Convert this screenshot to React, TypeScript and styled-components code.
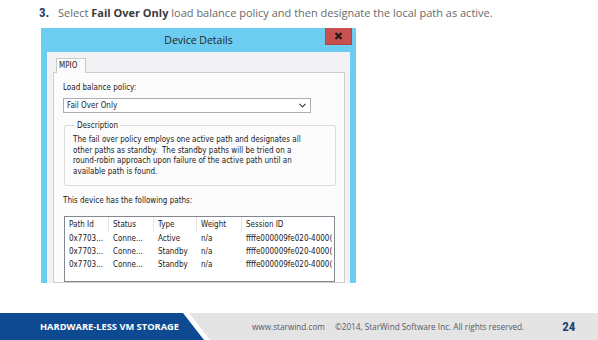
import React from "react";
import styled, { createGlobalStyle } from "styled-components";

const GlobalStyle = createGlobalStyle`
  html, body { margin: 0; padding: 0; background: #ffffff; }
  body { width: 598px; height: 340px; overflow: hidden; }
  * { box-sizing: border-box; }
`;

const Page = styled.div`
  width: 598px;
  height: 340px;
  display: flex;
  flex-direction: column;
  padding-top: 5px;
`;

const Heading = styled.div`
  display: flex;
  align-items: baseline;
  padding-left: 39px;
  height: 16px;
  font-family: "Open Sans", sans-serif;
  font-size: 11px;
  line-height: 16px;
  color: #6a6a6a;
  white-space: nowrap;
`;

const StepNum = styled.span`
  font-family: "Liberation Sans Narrow", "Roboto Condensed", "Liberation Sans", sans-serif;
  font-weight: 700;
  font-size: 13px;
  color: #1d3f72;
  width: 19px;
`;

const Strong = styled.b`
  color: #3a3a3a;
  font-weight: 700;
`;

const Dialog = styled.div`
  margin: 7px 0 0 41px;
  width: 315px;
  height: 255px;
  overflow: hidden;
  background: #6dcdf0;
  display: flex;
  flex-direction: column;
`;

const TitleBar = styled.div`
  position: relative;
  height: 24px;
  flex: none;
  display: flex;
  align-items: center;
  justify-content: center;
  font-family: "Open Sans", sans-serif;
  font-size: 10.5px;
  color: #1e1e1e;
`;

const CloseBtn = styled.div`
  position: absolute;
  top: 0;
  right: 4px;
  width: 27px;
  height: 17px;
  background: #c75050;
  border: 1px solid #b34545;
  border-top: none;
  display: flex;
  align-items: center;
  justify-content: center;
`;

const Body = styled.div`
  flex: 1;
  margin: 0 6px;
  background: #f2f1f3;
  padding: 6px 5px 0 6px;
  display: flex;
  flex-direction: column;
  font-family: "DejaVu Sans Condensed", "DejaVu Sans", sans-serif;
  font-size: 8px;
  color: #1a1a1a;
`;

const TabRow = styled.div`
  display: flex;
  padding-left: 3px;
`;

const Tab = styled.div`
  height: 15px;
  width: 30px;
  padding-left: 2px;
  border: 1px solid #c9c9c9;
  border-bottom: none;
  background: #fcfcfc;
  line-height: 14px;
  margin-bottom: -1px;
  position: relative;
  z-index: 1;
`;

const Panel = styled.div`
  flex: 1;
  border: 1px solid #cfcfcf;
  background: #fcfcfc;
  padding: 9px 10px 0 9px;
  display: flex;
  flex-direction: column;
`;

const Label = styled.div<{ $mt?: number }>`
  line-height: 11px;
  margin-top: ${(p) => p.$mt ?? 0}px;
`;

const Select = styled.div`
  margin-top: 5px;
  width: 248px;
  height: 15px;
  border: 1px solid #abadb3;
  background: #ffffff;
  display: flex;
  align-items: center;
  justify-content: space-between;
  padding: 0 4px 0 3px;
`;

const Group = styled.fieldset`
  margin: 7px 0 0 1px;
  width: 272px;
  padding: 4px 8px 8px 8px;
  border: 1px solid #dcdcdc;
  border-radius: 2px;
`;

const Legend = styled.legend`
  padding: 0 2px;
  margin-left: 2px;
  line-height: 11px;
`;

const GroupLine = styled.div`
  line-height: 10.5px;
  white-space: nowrap;
`;

const Table = styled.div`
  margin: 10px 0 0 1px;
  width: 271px;
  flex: 1;
  border: 1px solid #828790;
  background: #ffffff;
  overflow: hidden;
`;

const Row = styled.div<{ $head?: boolean }>`
  display: grid;
  grid-template-columns: 44px 45px 43px 45px 120px;
  height: ${(p) => (p.$head ? 15 : 13)}px;
  align-items: center;
  white-space: nowrap;
`;

const Cell = styled.div<{ $head?: boolean }>`
  padding-left: 4px;
  height: 100%;
  display: flex;
  align-items: center;
  overflow: hidden;
  border-right: ${(p) => (p.$head ? "1px solid #e5e5e5" : "none")};
`;

const Footer = styled.div`
  margin-top: auto;
  height: 27px;
  flex: none;
  background: #e4e4e4;
  display: flex;
  align-items: center;
  font-family: "Open Sans", sans-serif;
  white-space: nowrap;
`;

const TabEdge = styled.div`
  width: 210px;
  height: 100%;
  background: #ffffff;
  clip-path: polygon(0 0, 189px 0, 210px 100%, 0 100%);
  flex: none;
`;

const BlueTab = styled.div`
  width: 204px;
  height: 100%;
  background: #0e4a91;
  clip-path: polygon(0 0, 183px 0, 204px 100%, 0 100%);
  display: flex;
  align-items: center;
  padding-left: 40px;
  color: #ffffff;
  font-weight: 700;
  font-size: 9.3px;
`;

const FootText = styled.span<{ $ml: number }>`
  margin-left: ${(p) => p.$ml}px;
  font-size: 8.2px;
  color: #555a66;
`;

const PageNum = styled.span`
  margin-left: 38px;
  font-family: "Liberation Sans Narrow", "Roboto Condensed", "Liberation Sans", sans-serif;
  font-weight: 700;
  font-size: 13px;
  color: #1d3f72;
`;

const description = [
  "The fail over policy employs one active path and designates all",
  "other paths as standby.\u00a0 The standby paths will be tried on a",
  "round-robin approach upon failure of the active path until an",
  "available path is found.",
];

const paths = [
  ["0x7703...", "Conne...", "Active", "n/a", "ffffe000009fe020-4000("],
  ["0x7703...", "Conne...", "Standby", "n/a", "ffffe000009fe020-4000("],
  ["0x7703...", "Conne...", "Standby", "n/a", "ffffe000009fe020-4000("],
];

export default function App() {
  return (
    <>
      <GlobalStyle />
      <Page>
        <Heading>
          <StepNum>3.</StepNum>
          <span>
            Select <Strong>Fail Over Only</Strong> load balance policy and then designate the local path as active.
          </span>
        </Heading>
        <Dialog>
          <TitleBar>
            Device Details
            <CloseBtn>
              <svg width="9" height="8" viewBox="0 0 9 8">
                <path d="M1.5 1 L7.5 7 M7.5 1 L1.5 7" stroke="#1a1a1a" strokeWidth="2" />
              </svg>
            </CloseBtn>
          </TitleBar>
          <Body>
            <TabRow>
              <Tab>MPIO</Tab>
            </TabRow>
            <Panel>
              <Label>Load balance policy:</Label>
              <Select>
                <span>Fail Over Only</span>
                <svg width="7" height="5" viewBox="0 0 7 5">
                  <path d="M0.5 0.8 L3.5 3.8 L6.5 0.8" stroke="#444" strokeWidth="1.2" fill="none" />
                </svg>
              </Select>
              <Group>
                <Legend>Description</Legend>
                {description.map((l) => (
                  <GroupLine key={l}>{l}</GroupLine>
                ))}
              </Group>
              <Label $mt={9}>This device has the following paths:</Label>
              <Table>
                <Row $head>
                  {["Path Id", "Status", "Type", "Weight", "Session ID"].map((h) => (
                    <Cell $head key={h}>{h}</Cell>
                  ))}
                </Row>
                {paths.map((r, i) => (
                  <Row key={i}>
                    {r.map((c, j) => (
                      <Cell key={j}>{c}</Cell>
                    ))}
                  </Row>
                ))}
              </Table>
            </Panel>
          </Body>
        </Dialog>
        <Footer>
          <TabEdge>
            <BlueTab>HARDWARE-LESS VM STORAGE</BlueTab>
          </TabEdge>
          <FootText $ml={42}>www.starwind.com</FootText>
          <FootText $ml={10}>©2014, StarWind Software Inc. All rights reserved.</FootText>
          <PageNum>24</PageNum>
        </Footer>
      </Page>
    </>
  );
}
